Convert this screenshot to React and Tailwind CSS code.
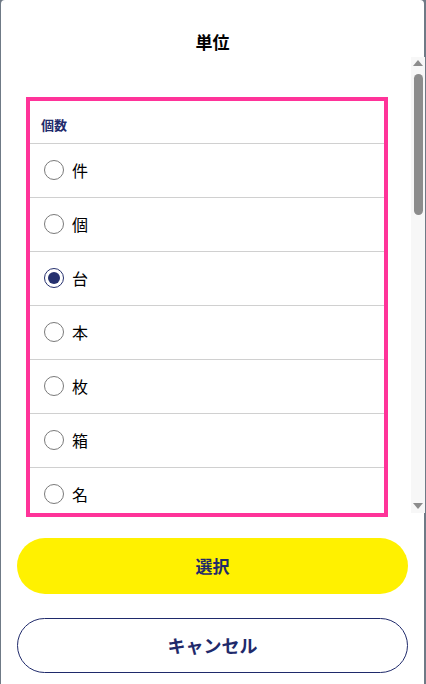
import React, { useState } from 'react'

const units = ['件', '個', '台', '本', '枚', '箱', '名']

function Radio({ checked }) {
  return (
    <span
      className={`w-[20px] h-[20px] rounded-full shrink-0 flex items-center justify-center bg-white ${
        checked ? 'border-[1.5px] border-[#25306e]' : 'border border-[#7a7a7a]'
      }`}
    >
      {checked && <span className="w-[12px] h-[12px] rounded-full bg-[#25306e]" />}
    </span>
  )
}

function Scrollbar() {
  return (
    <div className="w-[14px] h-[456px] bg-[#f7f7f7] flex flex-col items-center shrink-0">
      <svg width="10" height="7" viewBox="0 0 10 7" className="mt-[3px]">
        <path d="M5 0 L10 6 L0 6 Z" fill="#8c8c8c" />
      </svg>
      <div className="w-[9px] h-[141px] mt-[7px] rounded-full bg-[#8c8c8c]" />
      <div className="flex-1" />
      <svg width="10" height="7" viewBox="0 0 10 7" className="mb-[3px]">
        <path d="M0 0 L10 0 L5 6 Z" fill="#8c8c8c" />
      </svg>
    </div>
  )
}

export default function App() {
  const [selected, setSelected] = useState('台')

  return (
    <div
      className="w-[426px] h-[684px] bg-[#6f7a86] pl-[1px] pr-[2px] overflow-hidden"
      style={{ fontFamily: '"Noto Sans CJK JP", "Noto Sans", sans-serif' }}
    >
      <div className="w-full h-full bg-white rounded-t-[4px] flex flex-col">
        <div className="h-[57px] pt-[30px] text-center text-[17px] leading-[24px] font-bold text-black">
          単位
        </div>

        <div className="flex items-start">
          <div className="pl-[25px] pt-[40px]">
            <div className="w-[362px] h-[420px] border-[4px] border-[#ff3399] overflow-hidden">
              <div className="h-[42px] pl-[11px] pt-[15px] text-[13px] leading-[18px] font-bold text-[#1f2a6b]">
                個数
              </div>
              {units.map((u) => (
                <button
                  key={u}
                  onClick={() => setSelected(u)}
                  className="w-full h-[54px] border-t border-[#d0d0d0] flex items-center gap-[8px] pl-[14px] pb-[1px] text-left"
                >
                  <Radio checked={selected === u} />
                  <span className="text-[16px] leading-[20px] text-black">{u}</span>
                </button>
              ))}
            </div>
          </div>
          <div className="ml-[23px]">
            <Scrollbar />
          </div>
        </div>

        <div className="px-[16px] pt-[21px] flex flex-col gap-[24px]">
          <button className="w-[391px] h-[56px] rounded-full bg-[#fff100] text-[17px] font-bold text-[#1f2a6b]">
            選択
          </button>
          <button className="w-[391px] h-[55px] rounded-full bg-white border border-[#1f2a6b] text-[18px] font-bold text-[#1f2a6b]">
            キャンセル
          </button>
        </div>
      </div>
    </div>
  )
}
